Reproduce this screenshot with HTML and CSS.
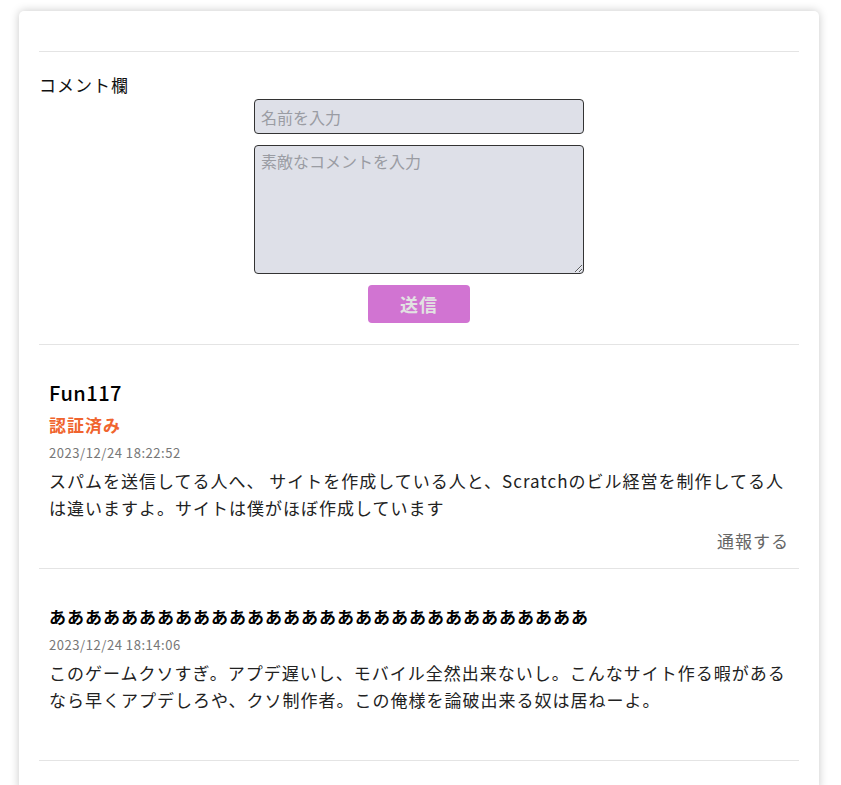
FILE: index.html
```html
<!DOCTYPE html>
<html lang="ja">
<head>
<meta charset="utf-8">
<title>コメント欄</title>
<link rel="stylesheet" href="styles.css">
</head>
<body>
<div class="page">
  <div class="card">
    <div class="top-space"></div>
    <hr class="rule">
    <section class="comment-form">
      <div class="form-label">コメント欄</div>
      <form class="form">
        <input class="field name-field" type="text" placeholder="名前を入力">
        <textarea class="field text-field" placeholder="素敵なコメントを入力"></textarea>
        <button class="send" type="button">送信</button>
      </form>
    </section>
    <hr class="rule">
    <article class="comment">
      <div class="name name-large">Fun117</div>
      <div class="badge">認証済み</div>
      <div class="date">2023/12/24 18:22:52</div>
      <p class="body">スパムを送信してる人へ、 サイトを作成している人と、Scratchのビル経営を制作してる人は違いますよ。サイトは僕がほぼ作成しています</p>
      <div class="report">通報する</div>
    </article>
    <hr class="rule">
    <article class="comment comment-last">
      <div class="name name-bold">ああああああああああああああああああああああああああああああ</div>
      <div class="date">2023/12/24 18:14:06</div>
      <p class="body">このゲームクソすぎ。アプデ遅いし、モバイル全然出来ないし。こんなサイト作る暇があるなら早くアプデしろや、クソ制作者。この俺様を論破出来る奴は居ねーよ。</p>
    </article>
    <hr class="rule">
  </div>
</div>
</body>
</html>
```

FILE: styles.css
```css
html, body {
  margin: 0;
  padding: 0;
  background: #ffffff;
}

body {
  font-family: "Noto Sans CJK JP", "Noto Sans", sans-serif;
  color: #222;
}

.page {
  padding: 11px 0 40px 19px;
}

.card {
  width: 760px;
  padding: 0 20px 30px;
  background: #fff;
  border-radius: 5px;
  box-shadow: 0 0 10px rgba(0, 0, 0, 0.22);
}

.top-space {
  height: 40px;
}

.rule {
  margin: 0;
  border: 0;
  height: 1px;
  background: #e4e4e4;
}

.comment-form {
  padding: 21px 0 21px;
}

.form-label {
  font-size: 17px;
  line-height: 24px;
  letter-spacing: 1px;
  color: #111;
}

.form {
  display: flex;
  flex-direction: column;
  align-items: center;
  gap: 11px;
  margin-top: 2px;
}

.field {
  box-sizing: border-box;
  width: 330px;
  border: 1px solid #333;
  border-radius: 4px;
  background: #dee0e8;
  font-family: "Noto Sans CJK JP", "Noto Sans", sans-serif;
  font-size: 16px;
  color: #333;
  padding: 4px 6px;
  margin: 0;
}

.field::placeholder {
  color: #9a9ca3;
}

.name-field {
  height: 35px;
}

.text-field {
  height: 129px;
  resize: vertical;
  line-height: 22px;
}

.send {
  width: 102px;
  height: 38px;
  border: 0;
  border-radius: 4px;
  background: #d174d2;
  color: #e2e2e2;
  font-family: "Noto Sans CJK JP", "Noto Sans", sans-serif;
  font-size: 18px;
  font-weight: bold;
  letter-spacing: 1px;
  padding: 0;
}

.comment {
  padding: 34px 10px 14px;
}

.comment-last {
  padding-bottom: 47px;
}

.name {
  color: #000;
  line-height: 28px;
}

.name-large {
  font-size: 20px;
  font-weight: 500;
  letter-spacing: 0.5px;
}

.name-bold {
  font-size: 17px;
  font-weight: bold;
  letter-spacing: 1px;
}

.badge {
  margin-top: 4px;
  font-size: 17px;
  line-height: 28px;
  font-weight: bold;
  color: #f0642e;
  letter-spacing: 1px;
}

.date {
  margin-top: 4px;
  font-size: 13px;
  line-height: 20px;
  color: #777;
  letter-spacing: 0.55px;
}

.body {
  margin: 4px 0 0;
  font-size: 17px;
  line-height: 27px;
  letter-spacing: 1px;
  color: #222;
}

.report {
  margin-top: 6px;
  text-align: right;
  font-size: 17px;
  line-height: 27px;
  letter-spacing: 1px;
  color: #666;
}
```
